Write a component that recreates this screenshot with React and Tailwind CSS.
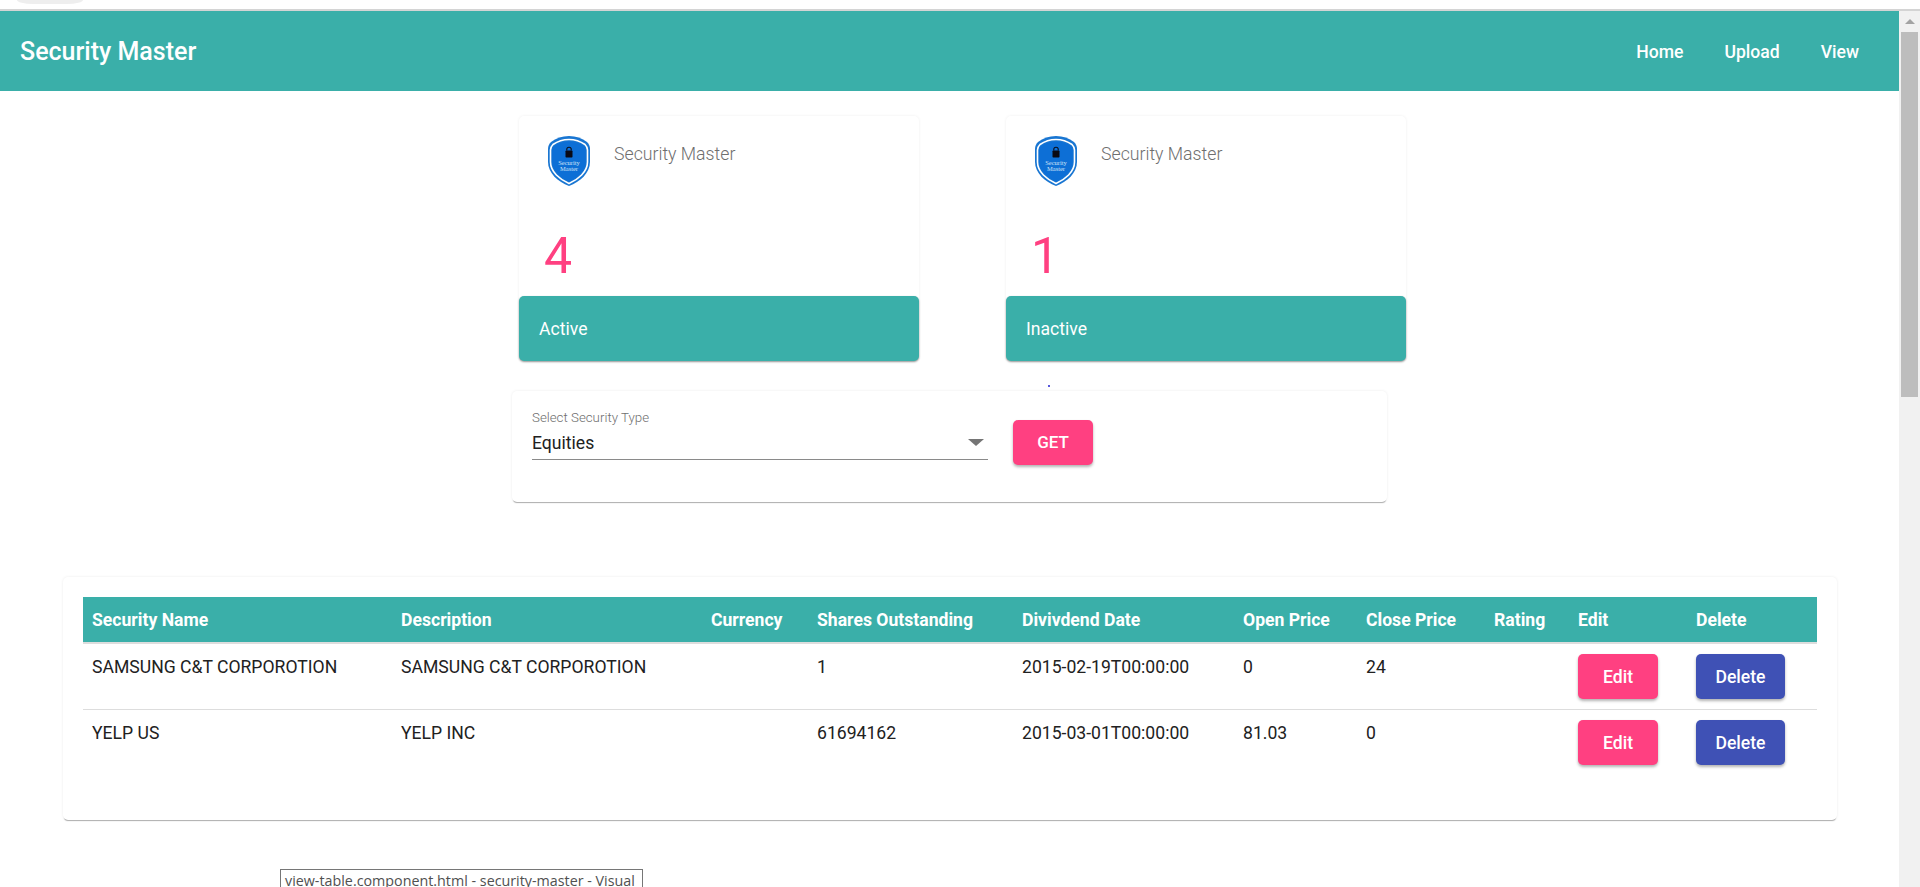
import React from 'react';

const ShieldLogo = () => (
  <svg viewBox="0 0 42 50" className="w-[42px] h-[50px] shrink-0">
    <path d="M21 0 C28 0 34 2 39 6 C41 8 42 10 42 13 L42 26 C42 37 32 46 21 50 C10 46 0 37 0 26 L0 13 C0 10 1 8 3 6 C8 2 14 0 21 0 Z" fill="#1976d2" />
    <path d="M21 3.5 C27 3.5 32 5 37 8.5 C38.5 10 39.5 11.5 39.5 14 L39.5 26 C39.5 36 30 43.5 21 47.5 C12 43.5 2.5 36 2.5 26 L2.5 14 C2.5 11.5 3.5 10 5 8.5 C10 5 15 3.5 21 3.5 Z" fill="none" stroke="#ffffff" strokeWidth="1.6" />
    <path d="M21 5.5 C26.5 5.5 31.5 7 36 10 C37.2 11.2 37.8 12.5 37.8 14.5 L37.8 26 C37.8 35 29 42 21 45.8 C13 42 4.2 35 4.2 26 L4.2 14.5 C4.2 12.5 4.8 11.2 6 10 C10.5 7 15.5 5.5 21 5.5 Z" fill="#0d6fd6" />
    <rect x="17.5" y="14.5" width="7" height="7" rx="0.8" fill="#0a0a14" />
    <path d="M18.8 14.5 V13.2 C18.8 10.6 23.2 10.6 23.2 13.2 V14.5" fill="none" stroke="#0a0a14" strokeWidth="1.1" />
    <text x="21" y="29" textAnchor="middle" fontSize="6.5" fill="#cfe3f7" fontFamily="'Liberation Serif', serif">Security</text>
    <text x="21" y="35" textAnchor="middle" fontSize="6.5" fill="#cfe3f7" fontFamily="'Liberation Serif', serif">Master</text>
  </svg>
);

const StatCard = ({ count, label }) => (
  <div className="w-[400px] h-[245px] bg-white rounded-[5px] flex flex-col shadow-[0_0_3px_rgba(0,0,0,0.07)]">
    <div className="flex-1 pl-[29px] pt-[20px] relative">
      <div className="flex items-start">
        <ShieldLogo />
        <span className="ml-[24px] mt-[5px] text-[17.7px] leading-[26px] font-light text-[#6f6f6f]">Security Master</span>
      </div>
      <div className="mt-[40px] -ml-[4px] text-[50px] leading-[60px] text-[#ff4081]">{count}</div>
    </div>
    <div className="h-[65px] bg-[#3aafa9] rounded-[5px] flex items-center pl-[20px] pt-[2px] text-[17.6px] text-white shadow-[0_1px_2px_rgba(0,0,0,0.4)]">
      {label}
    </div>
  </div>
);

const columns = [309, 310, 106, 205, 221, 123, 128, 84, 118, 130];
const headers = ['Security Name', 'Description', 'Currency', 'Shares Outstanding', 'Divivdend Date', 'Open Price', 'Close Price', 'Rating', 'Edit', 'Delete'];
const rows = [
  ['SAMSUNG C&T CORPOROTION', 'SAMSUNG C&T CORPOROTION', '', '1', '2015-02-19T00:00:00', '0', '24', ''],
  ['YELP US', 'YELP INC', '', '61694162', '2015-03-01T00:00:00', '81.03', '0', ''],
];

export default function App() {
  return (
    <div className="relative h-[887px] overflow-hidden bg-white font-['Roboto',sans-serif]">
      {/* browser strip */}
      <div className="h-[9px] bg-white">
        <div className="ml-[17px] w-[66px] h-[4px] bg-[#eeeeee] rounded-bl-[16px_4px] rounded-br-[16px_4px]" />
      </div>
      <div className="h-[2px] bg-[#d4d4d4]" />

      <div className="flex h-[876px]">
        <div className="flex-1 relative">
          {/* navbar */}
          <nav className="h-[80px] bg-[#3aafa9] flex items-center pl-[20px] pr-[40px] pt-[2px] text-white">
            <span className="text-[25px] font-medium">Security Master</span>
            <div className="ml-auto flex gap-[41px] text-[17.6px] font-medium">
              <span>Home</span>
              <span>Upload</span>
              <span>View</span>
            </div>
          </nav>

          <div className="flex gap-[87px] ml-[519px] mt-[25px]">
            <StatCard count="4" label="Active" />
            <StatCard count="1" label="Inactive" />
          </div>

          <span className="absolute left-[1048px] top-[374px] w-[2px] h-[2px] rounded-full bg-[#2020d0]" />

          {/* security type select */}
          <div className="ml-[512px] mt-[30px] w-[875px] h-[111px] bg-white rounded-[5px] shadow-[0_2px_1px_-1px_rgba(0,0,0,0.3),0_0_3px_rgba(0,0,0,0.08)] pl-[20px] pt-[19px] flex items-start">
            <div className="w-[456px] h-[50px] border-b border-[#8a8a8a] relative">
              <div className="text-[13.3px] leading-[16px] font-light text-[#6f6f6f]">Select Security Type</div>
              <div className="text-[17.6px] leading-[27px] mt-[4px] text-[#212121]">Equities</div>
              <span className="absolute right-[4px] top-[29px] w-0 h-0 border-x-[8px] border-x-transparent border-t-[7px] border-t-[#757575]" />
            </div>
            <button className="ml-[25px] mt-[10px] w-[80px] h-[45px] rounded-[5px] bg-[#ff4081] text-white text-[17px] font-medium shadow-[0_2px_3px_rgba(0,0,0,0.3)]">GET</button>
          </div>

          {/* table */}
          <div className="ml-[63px] mt-[75px] w-[1774px] h-[243px] bg-white rounded-[5px] p-[20px] shadow-[0_2px_1px_-1px_rgba(0,0,0,0.3),0_0_3px_rgba(0,0,0,0.08)]">
            <table className="w-[1734px] table-fixed border-collapse text-[17.6px] leading-[27px] text-[#212121]">
              <colgroup>
                {columns.map((w, i) => (
                  <col key={i} style={{ width: w }} />
                ))}
              </colgroup>
              <thead>
                <tr className="bg-[#3aafa9] text-white h-[46px] border-b-2 border-[#dddddd]">
                  {headers.map((h) => (
                    <th key={h} className="px-[9px] pt-[2px] text-left font-bold text-[17.6px] whitespace-nowrap">{h}</th>
                  ))}
                </tr>
              </thead>
              <tbody>
                {rows.map((row, i) => (
                  <tr key={i} className={i === 0 ? 'border-b border-[#dddddd]' : ''}>
                    {row.map((cell, j) => (
                      <td key={j} className="px-[9px] py-[10px] align-top whitespace-nowrap">{cell}</td>
                    ))}
                    <td className="px-[9px] py-[10px] align-top">
                      <button className="w-[80px] h-[45px] pt-[1px] rounded-[5px] bg-[#ff4081] text-white text-[17.6px] font-medium shadow-[0_2px_3px_rgba(0,0,0,0.3)]">Edit</button>
                    </td>
                    <td className="px-[9px] py-[10px] align-top">
                      <button className="w-[89px] h-[45px] pt-[1px] rounded-[5px] bg-[#3f51b5] text-white text-[17.6px] font-medium shadow-[0_2px_3px_rgba(0,0,0,0.3)]">Delete</button>
                    </td>
                  </tr>
                ))}
              </tbody>
            </table>
          </div>
        </div>

        {/* scrollbar */}
        <div className="w-[21px] bg-[#f1f1f1] flex flex-col pl-[2px]">
          <div className="h-[21px] w-[17px] flex items-center justify-center">
            <span className="w-0 h-0 border-x-[5px] border-x-transparent border-b-[5px] border-b-[#a3a3a3]" />
          </div>
          <div className="w-[17px] h-[365px] bg-[#bdbdbd]" />
        </div>
      </div>

      {/* taskbar tooltip */}
      <div className="absolute left-[280px] top-[869px] w-[363px] h-[30px] bg-white border border-[#767676] pl-[4px] font-['Open_Sans',sans-serif] text-[14.3px] leading-[22px] text-[#505050] whitespace-nowrap">
        view-table.component.html - security-master - Visual
      </div>
    </div>
  );
}
